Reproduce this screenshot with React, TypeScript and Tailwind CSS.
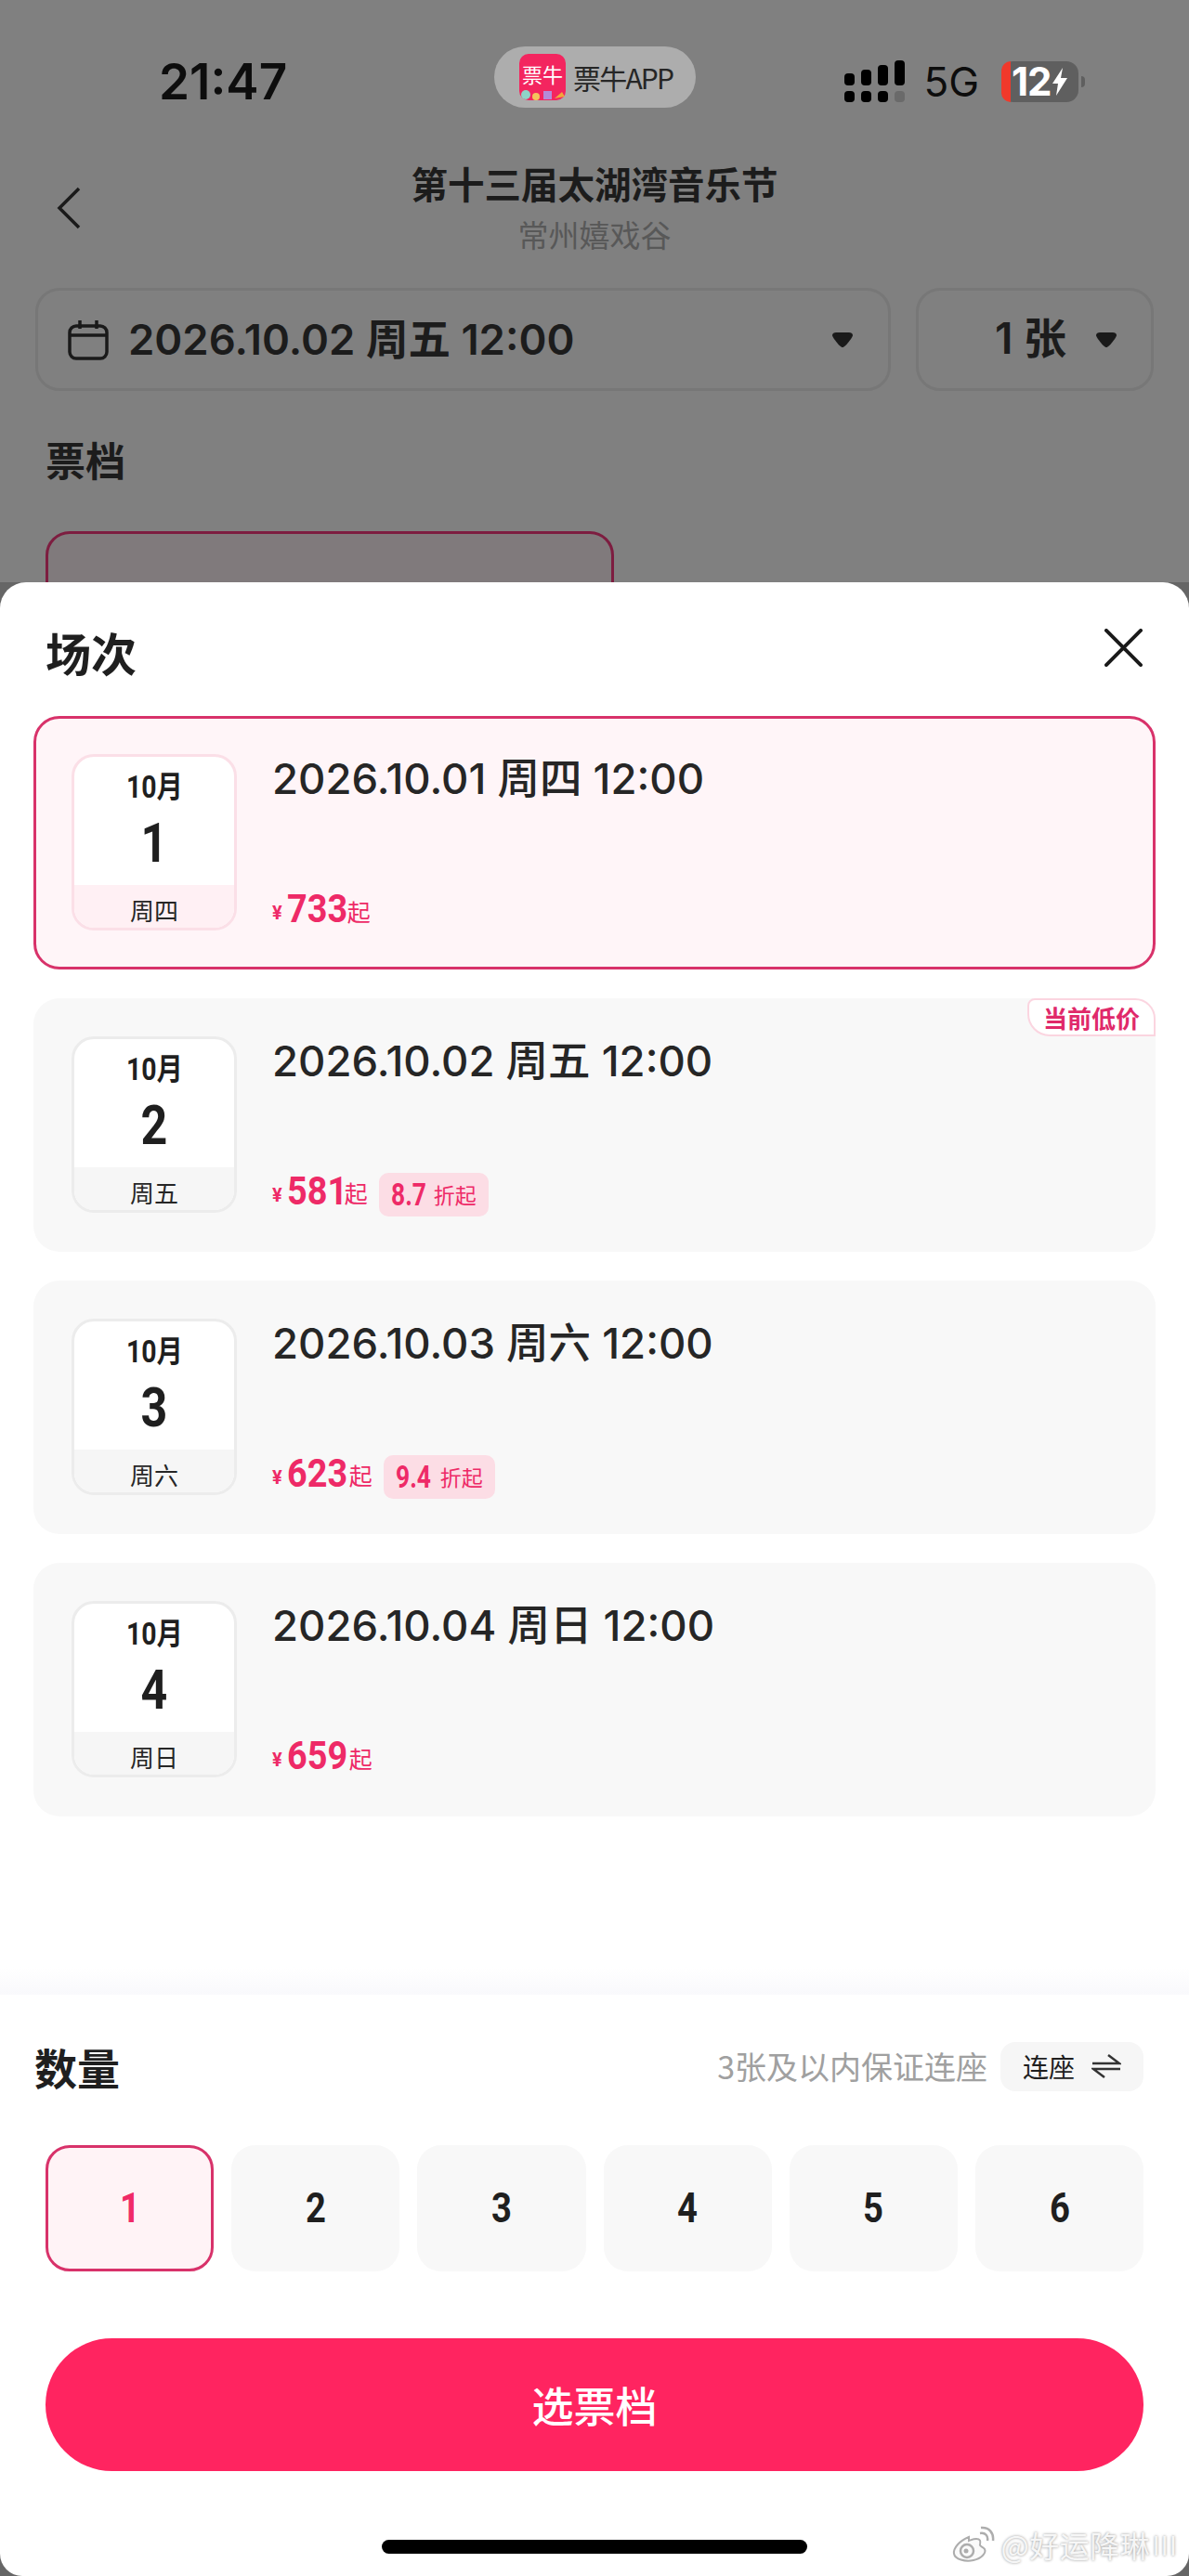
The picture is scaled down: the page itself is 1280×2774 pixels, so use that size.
const sans = "font-['Inter','Noto_Sans_CJK_SC',sans-serif]"

// the app uses a condensed DIN style for numbers, Roboto squeezed is the closest we have
const cond = "font-['Roboto','Noto_Sans_CJK_SC',sans-serif] font-bold inline-block"

type Session = {
  date: string
  label: string
  day: number
  price: number
  priceW: string
  discount?: string
  discountW?: string
  lowest?: boolean
  selected?: boolean
}

const sessions: Session[] = [
  { date: '2026.10.01', label: '周四', day: 1, price: 733, priceW: 'w-[64px]', selected: true },
  { date: '2026.10.02', label: '周五', day: 2, price: 581, priceW: 'w-[61px]', discount: '8.7', discountW: 'w-[36px]', lowest: true },
  { date: '2026.10.03', label: '周六', day: 3, price: 623, priceW: 'w-[66px]', discount: '9.4', discountW: 'w-[38px]' },
  { date: '2026.10.04', label: '周日', day: 4, price: 659, priceW: 'w-[66px]' },
]

function Caret({ className }: { className: string }) {
  return (
    <svg viewBox="0 0 24 16" className={`h-[16px] w-[24px] ${className}`}>
      <path d="M1 3c0-2 2-3 4-3h14c2 0 4 1 4 3 0 2-8 13-11 13S1 5 1 3z" fill="#1a1a1a" />
    </svg>
  )
}

function StatusBar() {
  return (
    <div className="flex h-[126px] items-center pl-[171px] pr-[112px] pt-[40px]">
      <span className={`mt-[10px] w-[361px] text-[53px] leading-none font-semibold text-[#0d0d0d] ${sans}`}>21:47</span>
      <div className="flex h-[66px] w-[217px] items-center rounded-full bg-[#adadad] pl-[27px]">
        <div className="relative flex h-[50px] w-[50px] items-start justify-center rounded-[10px] bg-[#f3255f] pt-[10px] text-[22px] leading-none text-white">
          票牛
          <svg viewBox="0 0 50 12" className="absolute bottom-0 left-0 h-[12px] w-[50px]">
            <circle cx="7" cy="6" r="5" fill="#8fd3c8" />
            <circle cx="18" cy="8" r="4" fill="#f4c35c" />
            <rect x="26" y="2" width="9" height="9" fill="#b58ad8" />
            <path d="M38 10l8-7 3 5z" fill="#f2a63c" />
          </svg>
        </div>
        <span className="ml-[8px] text-[30px] leading-[38px] tracking-[-1.8px] whitespace-nowrap text-[#262626]">票牛APP</span>
      </div>
      <div className="ml-auto mt-[10px] flex items-center">
        <svg viewBox="0 0 66 46" className="h-[46px] w-[66px]">
          <rect x="0" y="14" width="11" height="13" rx="4" />
          <rect x="18" y="10" width="11" height="17" rx="4" />
          <rect x="36" y="5" width="11" height="22" rx="4" />
          <rect x="54" y="0" width="11" height="27" rx="4" />
          <rect x="0" y="33" width="11" height="12" rx="4" />
          <rect x="18" y="33" width="11" height="12" rx="4" />
          <rect x="36" y="33" width="11" height="12" rx="4" />
          <rect x="54" y="33" width="11" height="12" rx="4" fill="#6a6a6a" />
        </svg>
        <span className={`ml-[19px] text-[44px] leading-none font-normal text-[#0d0d0d] ${sans}`}>5G</span>
        <div className="relative ml-[24px] flex h-[44px] w-[83px] items-center rounded-[13px] bg-[#5f5f5f]">
          <div className="h-full w-[10px] rounded-l-[13px] bg-[#f0392b]" />
          <span className={`ml-[1px] text-[42px] leading-none font-bold tracking-[-1px] text-white ${sans}`}>12</span>
          <svg viewBox="0 0 16 30" className="ml-[1px] h-[30px] w-[16px]">
            <path d="M11 0L0 17h6l-2 13L16 11H9z" fill="#fff" />
          </svg>
        </div>
        <div className="ml-[3px] h-[12px] w-[4px] rounded-r-full bg-[#5f5f5f]" />
      </div>
    </div>
  )
}

function PageBehind() {
  return (
    <div className="h-[627px] shrink-0 overflow-hidden bg-[#808080]">
      <StatusBar />
      <div className="relative flex h-[184px] flex-col items-center pt-[46px]">
        <svg viewBox="0 0 28 46" className="absolute left-[60px] top-[75px] h-[46px] w-[28px]">
          <path d="M25 2L4 23l21 21" fill="none" stroke="#1a1a1a" strokeWidth="3.5" />
        </svg>
        <div className="text-[39.5px] leading-[50px] font-bold text-[#1c1c1c]">第十三届太湖湾音乐节</div>
        <div className="mt-[10px] text-[33px] leading-[40px] text-[#585858]">常州嬉戏谷</div>
      </div>
      <div className="flex gap-[27px] pl-[38px] pr-[38px]">
        <div className="flex h-[111px] w-[921px] items-center rounded-[26px] border-[3px] border-[#777777] pl-[32px] pr-[37px]">
          <svg viewBox="0 0 44 44" className="h-[44px] w-[44px]">
            <rect x="2" y="7" width="40" height="35" rx="7" fill="none" stroke="#1a1a1a" strokeWidth="3.5" />
            <path d="M2 17h40M13 1v9M31 1v9" fill="none" stroke="#1a1a1a" strokeWidth="3.5" />
          </svg>
          <span className={`ml-[21px] text-[45.5px] leading-none font-semibold text-[#1c1c1c] ${sans}`}>2026.10.02 周五 12:00</span>
          <Caret className="ml-auto" />
        </div>
        <div className="flex h-[111px] w-[256px] items-center rounded-[26px] border-[3px] border-[#777777] pl-[82px]">
          <span className={`-mt-[3px] text-[46px] leading-none font-semibold whitespace-pre text-[#1c1c1c] ${sans}`}>1 张</span>
          <Caret className="ml-[31px]" />
        </div>
      </div>
      <div className="ml-[49px] mt-[48px] text-[43px] leading-[50px] font-bold text-[#1c1c1c]">票档</div>
      <div className="ml-[49px] mt-[53px] h-[120px] w-[612px] rounded-[26px] border-[3px] border-[#7d1d40] bg-[#807a7c]" />
    </div>
  )
}

function SessionCard({ s }: { s: Session }) {
  return (
    <div
      className={`relative flex h-[273px] rounded-[28px] ${
        s.selected ? 'border-[3px] border-[#d8326a] bg-[#fff5f8] pl-[38px] pt-[38px]' : 'bg-[#f8f8f8] pl-[41px] pt-[41px]'
      }`}
    >
      <div
        className={`flex h-[190px] w-[178px] flex-col overflow-hidden rounded-[24px] border-[3px] bg-white ${
          s.selected ? 'border-[#fbdfe7]' : 'border-[#ececec]'
        }`}
      >
        <div className="mt-[14px] text-center leading-[38px]">
          <span className={`${cond} scale-x-[0.86] text-[33px] text-[#1f1f1f]`}>10月</span>
        </div>
        <div className="mt-[5px] text-center leading-[64px]">
          <span className={`${cond} scale-x-[0.85] text-[59px] text-[#1f1f1f]`}>{s.day}</span>
        </div>
        <div
          className={`mt-auto h-[50px] text-center text-[26px] leading-[54px] text-[#262626] ${
            s.selected ? 'bg-[#fff0f4]' : 'bg-[#f6f6f6]'
          }`}
        >
          {s.label}
        </div>
      </div>
      <div className="ml-[38px] flex h-[189px] flex-col">
        <div className={`text-[45.5px] leading-[54px] font-medium text-[#262626] ${sans}`}>
          {s.date} {s.label} 12:00
        </div>
        <div className="mt-auto flex items-center">
          <span className={`${cond} mt-[10px] text-[20px] leading-none text-[#ee2a67]`}>¥</span>
          <span className={`${cond} ${s.priceW} ml-[5px] origin-left scale-x-[0.88] whitespace-nowrap text-[43px] leading-[46px] text-[#ee2a67]`}>
            {s.price}
          </span>
          <span className="ml-[1px] mt-[6px] text-[25px] leading-none text-[#ee2a67]">起</span>
          {s.discount && (
            <span className="ml-[12px] mt-[5px] -mb-[5px] flex h-[47px] items-center rounded-[10px] bg-[#fcdde5] pl-[13px] pr-[13px]">
              <span className={`${cond} ${s.discountW} origin-left scale-x-[0.8] whitespace-nowrap text-[33px] leading-none text-[#ee2a67]`}>
                {s.discount}
              </span>
              <span className="ml-[10px] text-[23px] leading-none text-[#ee2a67]">折起</span>
            </span>
          )}
        </div>
      </div>
      {s.lowest && (
        <div className="absolute right-0 top-0 flex h-[41px] w-[138px] items-center justify-center rounded-tl-[8px] rounded-tr-[22px] rounded-bl-[24px] border-2 border-[#fbd5e0] bg-white text-[26px] leading-none font-semibold text-[#e0296a]">
          当前低价
        </div>
      )}
    </div>
  )
}

function Sheet() {
  return (
    <div className="flex flex-1 flex-col rounded-t-[28px] rounded-b-[24px] bg-white">
      <div className="flex h-[144px] items-start justify-between pl-[49px] pr-[50px]">
        <div className="mt-[45px] text-[49px] leading-[60px] font-bold text-[#1f1f1f]">场次</div>
        <svg viewBox="0 0 42 42" className="mt-[50px] h-[41px] w-[41px]">
          <path d="M2 2l38 38M40 2L2 40" fill="none" stroke="#1a1a1a" strokeWidth="4" strokeLinecap="round" />
        </svg>
      </div>
      <div className="flex flex-col gap-[31px] pl-[36px] pr-[36px]">
        {sessions.map((s) => (
          <SessionCard key={s.date} s={s} />
        ))}
      </div>
      <div className="mt-[162px] h-[30px] bg-gradient-to-b from-white to-[#f9f9fc]" />
      <div className="pl-[37px] pr-[49px] pt-[49px]">
        <div className="flex h-[56px] items-center">
          <span className="text-[46px] leading-none font-bold text-[#1f1f1f]">数量</span>
          <span className="ml-auto text-[34px] leading-none text-[#a0a0a0]">3张及以内保证连座</span>
          <span className="ml-[14px] flex h-[53px] w-[154px] items-center justify-center rounded-[16px] bg-[#f6f6f6] text-[28px] leading-none text-[#1f1f1f]">
            连座
            <svg viewBox="0 0 32 28" className="ml-[18px] h-[28px] w-[32px]">
              <path d="M1 11h29L18 2M31 17H2l12 9" fill="none" stroke="#333" strokeWidth="2.5" />
            </svg>
          </span>
        </div>
      </div>
      <div className="mt-[57px] grid grid-cols-6 gap-[19px] pl-[49px] pr-[49px]">
        {[1, 2, 3, 4, 5, 6].map((n) => (
          <div
            key={n}
            className={`flex h-[136px] items-center justify-center rounded-[26px] ${
              n === 1 ? 'border-[3px] border-[#d8326a] bg-[#fff3f6] text-[#f02a67]' : 'bg-[#f8f8f8] text-[#1f1f1f]'
            }`}
          >
            <span className={`${cond} scale-x-[0.85] text-[45px]`}>{n}</span>
          </div>
        ))}
      </div>
      <div className="mx-[49px] mt-[72px] flex h-[143px] items-center justify-center rounded-full bg-[#ff2460] text-[45px] font-medium text-white">
        选票档
      </div>
      <div className="mx-auto mt-[74px] h-[15px] w-[458px] rounded-full bg-black" />
    </div>
  )
}

export default function App() {
  return (
    <div className="relative flex h-[2774px] w-[1280px] flex-col overflow-hidden bg-[#666666] font-['Noto_Sans_CJK_SC','Noto_Sans',sans-serif]">
      <PageBehind />
      <Sheet />
      {/* weibo watermark */}
      <div className="absolute bottom-[14px] right-[12px] flex items-center text-[#f6f6f6] [text-shadow:0_0_3px_#8f8f8f]">
        <svg viewBox="0 0 46 40" className="h-[40px] w-[46px]">
          <path d="M18 12C8 16 1 24 2 30c1 6 12 9 21 7s14-8 12-12c-2-3-6-3-5-5 1-4 0-6-4-6-3 0-5 1-8 2z" fill="#fafafa" stroke="#adadad" strokeWidth="2" />
          <circle cx="16" cy="27" r="7" fill="none" stroke="#adadad" strokeWidth="2.5" />
          <circle cx="15" cy="27" r="2.5" fill="#adadad" />
          <path d="M30 8c6-1 9 3 8 8M31 2c9-1 14 6 13 14" fill="none" stroke="#adadad" strokeWidth="2.5" />
        </svg>
        <span className="ml-[7px] text-[32px] leading-none tracking-[0.5px]">@好运降琳</span>
        <span className="ml-[2px] text-[28px] leading-none tracking-[1px]">III</span>
      </div>
    </div>
  )
}
